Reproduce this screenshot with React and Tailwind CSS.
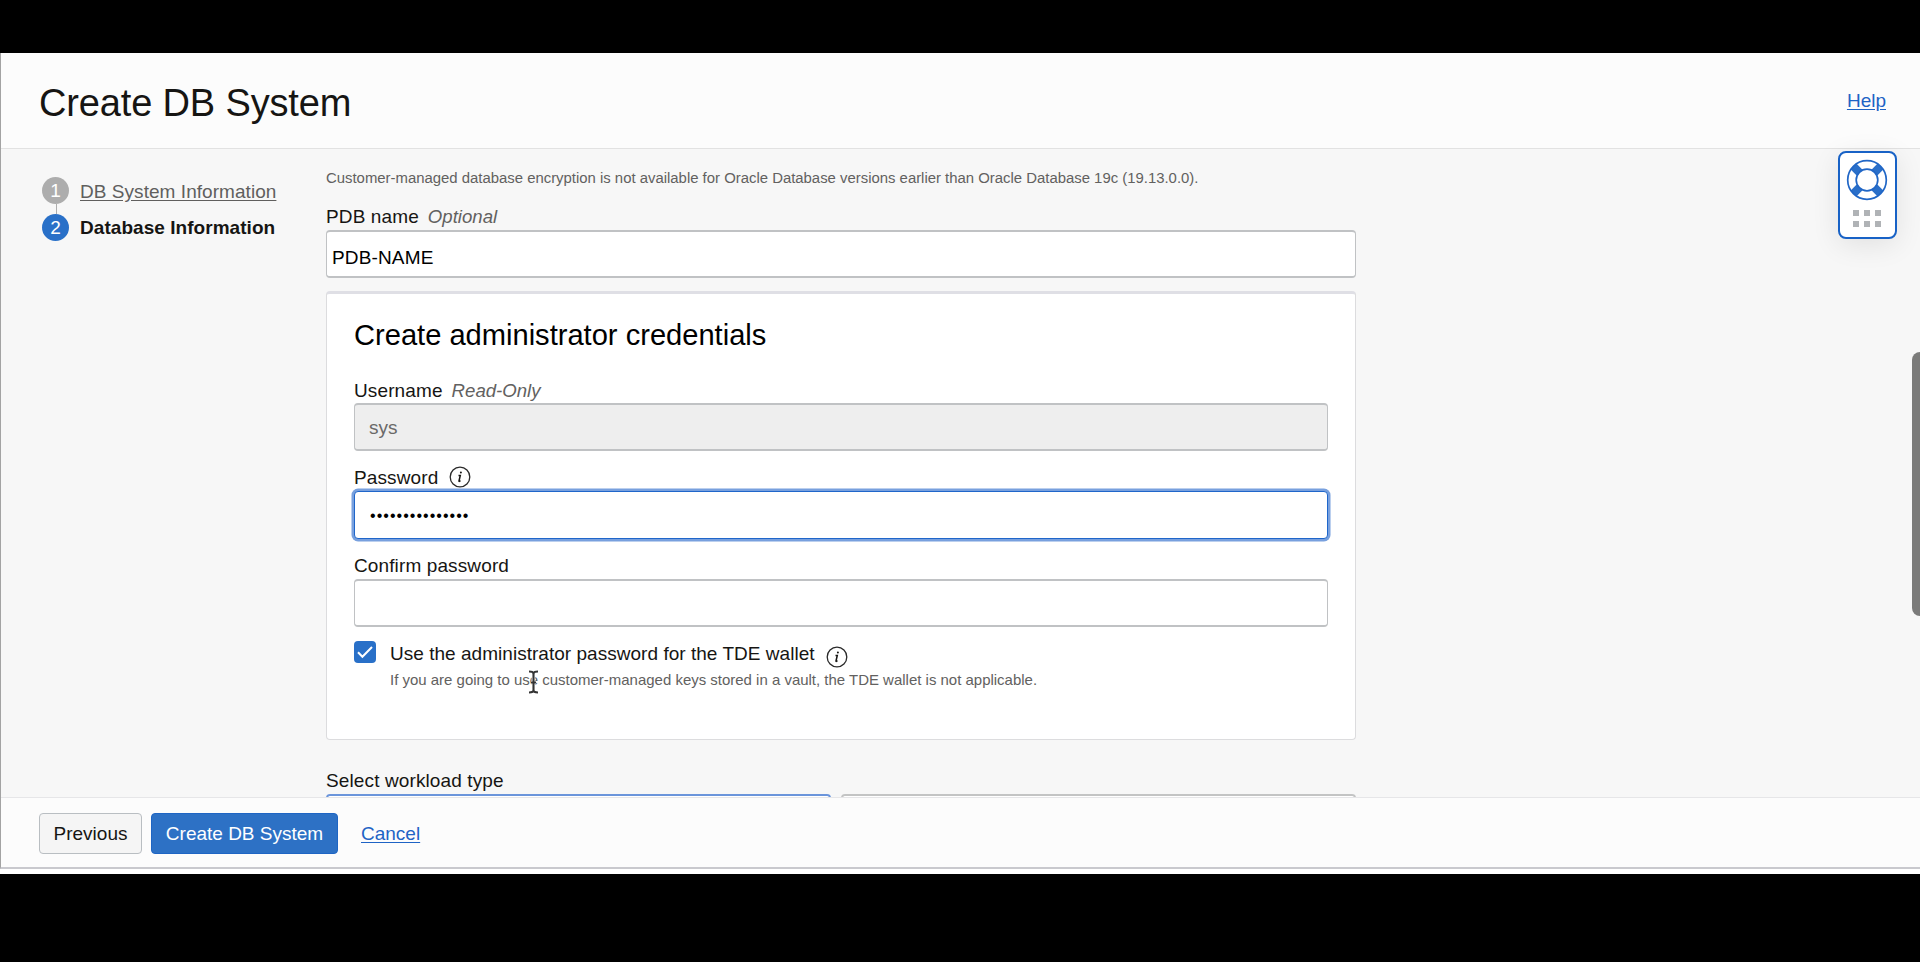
import React from "react";

function InfoIcon({ className }) {
  return (
    <svg className={className} width="22" height="22" viewBox="0 0 22 22" fill="none">
      <circle cx="11" cy="11" r="9.8" stroke="#2a2a2a" strokeWidth="1.3" />
      <path d="M9.5 9.4h1.8l-1.3 5.6c-.1.7.5.5 1.4-.5" stroke="#161513" strokeWidth="1.5" />
      <circle cx="11.9" cy="6.5" r="1" fill="#161513" />
    </svg>
  );
}

function LifeRing() {
  return (
    <svg width="42" height="42" viewBox="0 0 42 42" fill="none">
      <circle cx="21" cy="21" r="15.5" stroke="#fff" strokeWidth="9" />
      <g stroke="#2a6fc9" strokeWidth="8.4">
        <path d="M7.4 7.4 13.6 13.6M28.4 28.4 34.6 34.6M34.6 7.4 28.4 13.6M13.6 28.4 7.4 34.6" />
      </g>
      <circle cx="21" cy="21" r="19.3" stroke="#2066c6" strokeWidth="1.7" />
      <circle cx="21" cy="21" r="10.8" fill="#fff" stroke="#2066c6" strokeWidth="1.7" />
    </svg>
  );
}

function Label({ children, hint, info }) {
  return (
    <div className="flex h-[25px] text-[19px] leading-6 whitespace-pre">
      <span className="tracking-[0.12px]">{children}</span>
      {hint && <span className="ml-[9px] text-[18.6px] text-[#626160] italic">{hint}</span>}
      {info && <InfoIcon className="ml-[11px]" />}
    </div>
  );
}

const field = "h-12 rounded-[4px] border-x border-y-2 border-[#c0c2c4]";

export default function App() {
  return (
    <div className="h-[962px] w-full overflow-hidden bg-black pt-[53px] font-['Liberation_Sans',Arial,sans-serif] text-[#161513]">
      <div className="relative flex h-[821px] flex-col bg-white">
        <div className="flex h-[816px] flex-col border-b-2 border-l border-b-[#c9c9ce] border-l-[#a3a3a3] bg-[#fcfcfc]">
          <header className="flex h-[96px] shrink-0 justify-between border-b border-[#e2e2e2] pr-[34px] pl-[38px]">
            <h1 className="mt-[26px] text-[38px] leading-[48px] tracking-[-0.15px]">Create DB System</h1>
            <a className="mt-9 text-[19px] leading-6 text-[#1e63c5] underline underline-offset-2">Help</a>
          </header>

          <main className="flex h-[648px] shrink-0 overflow-hidden bg-[#f7f7f7]">
            <nav className="w-[325px] shrink-0 pt-[28px] pl-[41px] text-[19px] leading-[28px]">
              <div className="flex h-[27px]">
                <span className="h-[27px] w-[27px] rounded-full bg-[#adadad] text-center text-white">1</span>
                <a className="ml-[11px] pt-px tracking-[0.05px] text-[#605f5e] underline underline-offset-2">DB System Information</a>
              </div>
              <div className="ml-[14px] h-[10px] w-px bg-[#adadad]" />
              <div className="flex h-[27px]">
                <span className="h-[27px] w-[27px] rounded-full bg-[#2970c8] text-center text-white">2</span>
                <b className="ml-[11px] tracking-[0.05px]">Database Information</b>
              </div>
            </nav>

            <div className="w-[1030px] shrink-0 pt-[19px]">
              <p className="mb-[17px] h-5 text-[14.9px] leading-5 whitespace-nowrap text-[#626160]">
                Customer-managed database encryption is not available for Oracle Database versions earlier than Oracle Database 19c (19.13.0.0).
              </p>
              <Label hint="Optional">PDB name</Label>
              <div className={field + " bg-white pt-[14px] pl-[5px] text-[19px] leading-6 tracking-[0.15px] text-black"}>PDB-NAME</div>

              <section className="mt-[13px] h-[449px] rounded-[4px] border border-t-[3px] border-[#dcdcde] border-t-[#dfdfe5] bg-white px-[27px] pt-[23px]">
                <h2 className="mb-[25px] text-[29.1px] leading-9 text-black">Create administrator credentials</h2>
                <div className="pt-px">
                  <div className="-mb-px">
                    <Label hint="Read-Only">Username</Label>
                  </div>
                </div>
                <div className={field + " mb-[15px] bg-[#eeeeee] pt-[11px] pl-[14px] text-[19px] leading-6 text-[#6a6968]"}>sys</div>
                <Label info>Password</Label>
                <div className="mb-[15px] h-12 rounded-[4px] border border-[#1f66ca] bg-white pt-[12px] pl-[15px] text-[16px] leading-6 tracking-[1.03px] text-black ring-[2.5px] ring-[#78a0de]">
                  •••••••••••••••
                </div>
                <Label>Confirm password</Label>
                <div className={field + " bg-white"} />

                <div className="mt-[14px] flex">
                  <span className="flex h-[22px] w-[22px] items-center justify-center rounded-[4px] bg-[#2970c8]">
                    <svg width="18" height="18" viewBox="0 0 18 18" fill="none">
                      <path d="M2 9.2 6.4 13.8 16 4" stroke="#fff" strokeWidth="2" />
                    </svg>
                  </span>
                  <div className="ml-[14px] pt-px">
                    <div className="flex h-7 text-[19px] leading-6 whitespace-nowrap">
                      <span className="tracking-[0.03px]">Use the administrator password for the TDE wallet</span>
                      <InfoIcon className="mt-[4px] ml-[11px]" />
                    </div>
                    <p className="relative text-[14.97px] leading-5 whitespace-nowrap text-[#626160]">
                      If you are going to use customer-managed keys stored in a vault, the TDE wallet is not applicable.
                      <svg className="absolute top-0 left-[138px]" width="11" height="24" viewBox="0 0 11 24" fill="none">
                        <path d="M1 1.5c2.5 0 4.5.5 4.5 2.5v16c0 2-2 2.5-4.5 2.5M10 1.5c-2.5 0-4.5.5-4.5 2.5v16c0 2 2 2.5 4.5 2.5M3 12.5h5" stroke="#fff" strokeWidth="3.6" />
                        <path d="M1 1.5c2.5 0 4.5.5 4.5 2.5v16c0 2-2 2.5-4.5 2.5M10 1.5c-2.5 0-4.5.5-4.5 2.5v16c0 2 2 2.5 4.5 2.5M3 12.5h5" stroke="#333" strokeWidth="2.1" />
                      </svg>
                    </p>
                  </div>
                </div>
              </section>

              <div className="mt-[29px]">
                <Label>Select workload type</Label>
              </div>
              <div className="flex gap-[10px]">
                <div className="h-24 w-[505px] rounded-[4px] border-2 border-[#6b95db] bg-white" />
                <div className="h-24 flex-1 rounded-[4px] border-2 border-[#c3c4c4] bg-white" />
              </div>
            </div>
          </main>

          <footer className="flex flex-1 border-t border-[#e6e6e8] pt-[15px] pl-[38px] text-[19px] leading-[38px]">
            <button className="h-[41px] w-[103px] rounded-[4px] border-[1.5px] border-[#b9bec2] bg-[#f5f5f5]">Previous</button>
            <button className="ml-[9px] h-[41px] w-[187px] rounded-[4px] border border-[#1e65c4] bg-[#2d71c5] text-white">Create DB System</button>
            <a className="ml-[23px] pt-[2px] text-[#1e63c5] underline underline-offset-2">Cancel</a>
          </footer>
        </div>

        <div className="absolute top-[98px] right-[23px] flex h-[88px] w-[59px] flex-col items-center rounded-[8px] border-[2.5px] border-[#1862c6] bg-white pt-[6px] pr-px shadow-[0_6px_28px_rgba(0,0,0,0.09)]">
          <LifeRing />
          <div className="mt-[9px] grid grid-cols-3 gap-x-[5px] gap-y-[5px]">
            {[0, 1, 2, 3, 4, 5].map((n) => (
              <span key={n} className="h-[6px] w-[6px] bg-[#b0b3b6]" />
            ))}
          </div>
        </div>
        <div className="absolute top-[299px] right-0 h-[264px] w-2 rounded-l-full bg-[#7b7b7a]" />
      </div>
    </div>
  );
}
